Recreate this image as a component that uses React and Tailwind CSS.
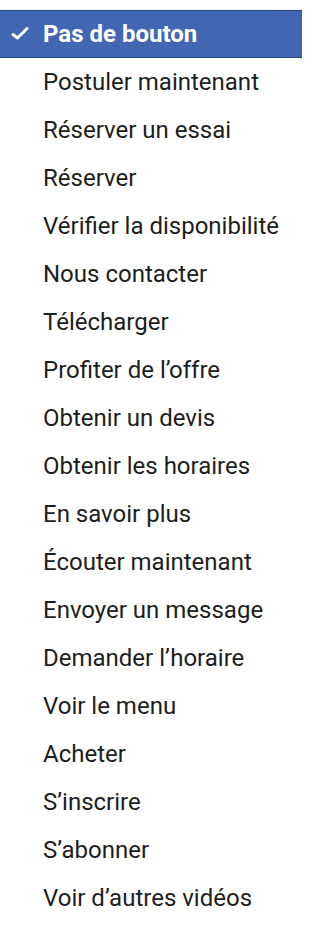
import { Check } from "lucide-react";

const options = [
  "Pas de bouton",
  "Postuler maintenant",
  "Réserver un essai",
  "Réserver",
  "Vérifier la disponibilité",
  "Nous contacter",
  "Télécharger",
  "Profiter de l’offre",
  "Obtenir un devis",
  "Obtenir les horaires",
  "En savoir plus",
  "Écouter maintenant",
  "Envoyer un message",
  "Demander l’horaire",
  "Voir le menu",
  "Acheter",
  "S’inscrire",
  "S’abonner",
  "Voir d’autres vidéos",
];

function OptionRow({ label, selected }) {
  if (selected) {
    return (
      <li className="relative flex h-[48px] items-center border-y border-[#29487d] bg-[#4267b2] pl-[43px] font-bold text-white">
        <span className="absolute left-[11px] top-[15px]">
          <svg width="18" height="14" viewBox="0 0 18 14" fill="none">
            <path
              d="M2 8.5 L6.5 12 L16 2.5"
              stroke="white"
              strokeWidth="3"
              strokeLinecap="round"
              strokeLinejoin="round"
            />
          </svg>
        </span>
        {label}
      </li>
    );
  }
  return (
    <li className="flex h-[48px] items-center pl-[43px] text-[#1c1e21]">
      {label}
    </li>
  );
}

export default function App() {
  return (
    <div className="min-h-[932px] w-[302px] bg-white">
      <ul
        className="py-[10px] text-[24px] leading-none"
        style={{ fontFamily: "Roboto, 'Liberation Sans', sans-serif" }}
      >
        {options.map((opt, i) => (
          <OptionRow key={opt} label={opt} selected={i === 0} />
        ))}
      </ul>
    </div>
  );
}
